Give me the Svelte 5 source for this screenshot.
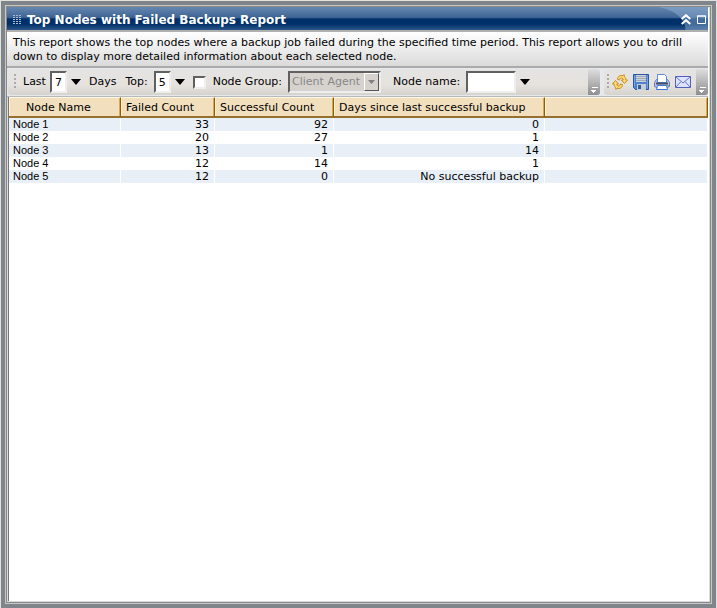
<script lang="ts">
  const columns = ['Node Name', 'Failed Count', 'Successful Count', 'Days since last successful backup'];

  const rows = [
    { name: 'Node 1', failed: 33, successful: 92, days: '0' },
    { name: 'Node 2', failed: 20, successful: 27, days: '1' },
    { name: 'Node 3', failed: 13, successful: 1, days: '14' },
    { name: 'Node 4', failed: 12, successful: 14, days: '1' },
    { name: 'Node 5', failed: 12, successful: 0, days: 'No successful backup' },
  ];

  let last = $state('7');
  let top = $state('5');
  let nodeName = $state('');
  let useGroup = $state(false);
</script>

{#snippet arrow(label: string)}
  <button class="arrow" aria-label={label}>
    <svg width="10" height="6" viewBox="0 0 10 6"><path d="M0 0h10L5 6z" fill="#000" /></svg>
  </button>
{/snippet}

{#snippet more()}
  <button class="more" aria-label="Toolbar options">
    <svg width="7" height="8" viewBox="0 0 7 8">
      <path d="M1 1.500h6M0 4.500h5M1 5.500h3M2 6.500h1" stroke="#fff" />
    </svg>
  </button>
{/snippet}

<main class="frame">
  <section class="report">
    <header class="title-bar">
      <svg class="grip-dots" width="8" height="10" viewBox="0 0 8 10">
        <path d="M0 .5h8M0 2.500h8M0 4.500h8M0 6.500h8M0 8.500h8" stroke="#a9bbd0" stroke-dasharray="2 1" />
      </svg>
      <h1>Top Nodes with Failed Backups Report</h1>
      <div class="window-buttons">
        <button aria-label="Collapse">
          <svg width="10" height="11" viewBox="0 0 10 11">
            <path d="M.7 5L5 1.200 9.300 5M.7 10L5 6.200 9.300 10" fill="none" stroke="#fff" stroke-width="2" />
          </svg>
        </button>
        <button aria-label="Maximize">
          <svg width="9" height="9" viewBox="0 0 9 9">
            <path d="M.5 1h8v7.500h-8zM0 1h9" fill="none" stroke="#fff" />
          </svg>
        </button>
      </div>
    </header>

    <p class="description">
      This report shows the top nodes where a backup job failed during the specified time period. This report allows you
      to drill down to display more detailed information about each selected node.
    </p>

    <div class="toolbars">
      <form class="toolbar filters" onsubmit={(e) => e.preventDefault()}>
        <span class="grip"></span>
        <label for="last">Last</label>
        <input id="last" class="short" bind:value={last} />
        {@render arrow('Choose days')}
        <span class="days">Days</span>
        <label class="top-label" for="top">Top:</label>
        <input id="top" class="short" bind:value={top} />
        {@render arrow('Choose top')}
        <input id="use-group" class="check" type="checkbox" bind:checked={useGroup} />
        <label for="use-group">Node Group:</label>
        <span class="select-box">
          <select aria-label="Node Group" disabled={!useGroup}>
            <option>Client Agent</option>
          </select>
          <span class="select-arrow">
            <svg width="7" height="4" viewBox="0 0 7 4"><path d="M0 0h7L3.500 4z" fill="#808080" /></svg>
          </span>
        </span>
        <label class="node-label" for="node-name">Node name:</label>
        <input id="node-name" class="node-name" bind:value={nodeName} />
        {@render arrow('Choose node name')}
        {@render more()}
      </form>

      <div class="toolbar actions">
        <span class="grip"></span>
        <button aria-label="Refresh">
          <svg width="16" height="16" viewBox="0 0 16 16">
            <g fill="#ffdc78" stroke="#c98a1c" stroke-linejoin="round">
              <path d="M5.500 5.500C5.500 2.500 8 .8 11 1.800L12 .6l.6 2.200c1 .8 1.400 2 1.200 3.200h1.700L12.500 9.500 9.500 6h1.700c0-1.500-1-2.200-2.200-2-1 .2-1.300 1-1.300 2z" />
              <path d="M10.500 10.500c0 3-2.500 4.700-5.500 3.700L4 15.400l-.6-2.200c-1-.8-1.400-2-1.200-3.200H.5L3.500 6.500 6.500 10H4.800c0 1.500 1 2.200 2.200 2 1-.2 1.300-1 1.300-2z" />
            </g>
          </svg>
        </button>
        <button aria-label="Save">
          <svg width="16" height="16" viewBox="0 0 16 16">
            <path d="M.5.5h15v15h-13l-2-2z" fill="#4d80d0" stroke="#2856a3" />
            <path d="M1.500 1.500v11M14.500 1.500v13" stroke="#78a4e4" />
            <path d="M3 1h10v7H3z" fill="#c9d3d8" />
            <path d="M3 2.500h10M3 4.500h10M3 6.500h10" stroke="#9eacb5" />
            <path d="M4 10h9v6H4z" fill="#c5cdd4" />
            <path d="M5 11h3v4H5z" fill="#315ba3" />
          </svg>
        </button>
        <button aria-label="Print">
          <svg width="16" height="16" viewBox="0 0 16 16">
            <path d="M2.500 5.500l-2 3v4l2 1h11l2-1v-4l-2-3z" fill="#b8c4e4" stroke="#6978ad" />
            <path d="M3.500.5h7l2 2v6h-9z" fill="#fff" stroke="#5989d3" />
            <path d="M2 9.500h12" stroke="#454e68" stroke-width="2" />
            <path d="M3.500 11.500h9l1 4h-11z" fill="#fff" stroke="#3976d5" />
            <path d="M13 11.500h2" stroke="#65b548" />
          </svg>
        </button>
        <button aria-label="Send by e-mail">
          <svg width="16" height="16" viewBox="0 0 16 16">
            <path d="M.5 2.500h15v11H.5z" fill="#dce2ff" stroke="#5061bd" />
            <path d="M1 3l7 6 7-6M1 13l5-5.500M15 13l-5-5.500" fill="none" stroke="#6677cf" />
          </svg>
        </button>
        {@render more()}
      </div>
    </div>

    <div class="results">
      <table>
        <colgroup>
          <col class="col-name" />
          <col class="col-failed" />
          <col class="col-successful" />
          <col class="col-days" />
          <col />
        </colgroup>
        <thead>
          <tr>
            {#each columns as column}
              <th>{column}</th>
            {/each}
            <th></th>
          </tr>
        </thead>
        <tbody>
          {#each rows as row}
            <tr>
              <td class="name">{row.name}</td>
              <td>{row.failed}</td>
              <td>{row.successful}</td>
              <td>{row.days}</td>
              <td></td>
            </tr>
          {/each}
        </tbody>
      </table>
    </div>
  </section>
</main>

<style>
  :global(body) {
    background: #e2e2dc;
  }

  .frame {
    display: flex;
    box-sizing: border-box;
    min-height: 100vh;
    padding: 1px 1px 0;
    font: 11px/14px Verdana, 'DejaVu Sans', sans-serif;
    color: #000;
  }

  .report {
    display: flex;
    flex-direction: column;
    flex: 1;
    min-width: 0;
    border: 4px solid #7f858a;
    box-shadow: inset 0 0 0 1px #c8c8c4, inset 0 0 0 2px #888, inset 0 0 0 3px #d8dadb;
    padding: 2px 4px 3px 2px;
    background: #fff;
  }

  button {
    display: flex;
    align-items: center;
    justify-content: center;
    margin: 0;
    padding: 0;
    border: 0;
    background: none;
  }

  svg {
    display: block;
  }

  .title-bar {
    display: flex;
    align-items: center;
    box-sizing: border-box;
    height: 23px;
    padding: 2px 2px 0 6px;
    background:
      radial-gradient(ellipse 36px 24px at 0 100%, transparent 97%, rgba(150, 180, 215, 0.45) 100%) right / 58px 100% no-repeat,
      linear-gradient(#6688b0, #3f6595 45%, #00306a 52%, #003069 75%, #2c5588);
    color: #fff;
  }

  h1 {
    margin: 0 0 0 6px;
    font-size: 12px;
    line-height: 16px;
    white-space: nowrap;
  }

  .window-buttons {
    display: flex;
    align-items: center;
    gap: 6px;
    margin-left: auto;
  }

  .description {
    margin: 0;
    min-height: 28px;
    padding: 4px 6px 2px;
    border-top: 2px solid #b0b0b0;
    border-bottom: 2px solid #aaa;
    background: linear-gradient(#fff, #dadada);
  }

  .toolbars {
    display: flex;
    gap: 4px;
    height: 26px;
    padding: 1px 0 1px 1px;
    background: #e5e9ed;
    border-bottom: 1px solid #b4b9be;
  }

  .toolbar {
    display: flex;
    align-items: center;
    border-radius: 3px;
    background: linear-gradient(#e4e4e3, #e6e2de 60%, #d6d3cd);
    white-space: nowrap;
  }

  .filters {
    flex: 1;
    padding-left: 6px;
  }

  .actions {
    gap: 5px;
    padding-left: 3px;
  }

  .grip {
    width: 2px;
    height: 16px;
    background: repeating-linear-gradient(#aaa 0 2px, transparent 2px 4px);
  }

  .filters .grip {
    margin-right: 7px;
  }

  .actions .grip {
    margin-right: -2px;
  }

  .arrow {
    width: 18px;
    height: 20px;
  }

  .more {
    align-self: stretch;
    align-items: flex-end;
    width: 12px;
    margin-left: auto;
    padding-bottom: 1px;
    border-radius: 0 3px 3px 0;
    background: linear-gradient(#dedede, #8e8e8e);
  }

  input,
  select {
    box-sizing: border-box;
    margin: 0;
    border: 2px solid;
    border-color: #606060 #eee #eee #606060;
    border-radius: 0;
    background: #fff;
    color: #000;
    font: inherit;
  }

  .short {
    width: 17px;
    height: 22px;
    margin-left: 4px;
    padding: 0 3px;
  }

  .days {
    margin: 0 9px 0 4px;
  }

  .top-label {
    margin-right: 2px;
  }

  .check {
    appearance: none;
    width: 13px;
    height: 13px;
    margin: 0 7px 0 4px;
  }

  .check:checked {
    background: #316ac5;
  }

  .select-box {
    position: relative;
    margin-left: 6px;
  }

  select {
    appearance: none;
    display: block;
    width: 93px;
    height: 22px;
    padding: 0 2px;
    background: #d6d3ce;
  }

  select:disabled {
    color: #888;
    opacity: 1;
  }

  .select-arrow {
    position: absolute;
    top: 2px;
    right: 2px;
    bottom: 2px;
    display: flex;
    align-items: center;
    justify-content: center;
    box-sizing: border-box;
    width: 15px;
    border: 1px solid;
    border-color: #fff #555 #555 #fff;
    background: #d6d3ce;
    pointer-events: none;
  }

  .node-label {
    margin-left: 12px;
  }

  .node-name {
    width: 50px;
    height: 22px;
    margin-left: 6px;
    padding: 0 3px;
  }

  .results {
    flex: 1;
    margin-left: 1px;
    border-left: 1px solid #777;
  }

  table {
    table-layout: fixed;
    width: 100%;
    border-collapse: separate;
    border-spacing: 0;
  }

  .col-name {
    width: 112px;
  }

  .col-failed {
    width: 94px;
  }

  .col-successful {
    width: 119px;
  }

  .col-days {
    width: 211px;
  }

  th {
    box-sizing: border-box;
    height: 21px;
    padding: 2px 0 0 5px;
    border-top: 1px solid #fff6df;
    border-right: 1px solid #8a5d10;
    border-bottom: 2px solid #94702c;
    background: #f1dfbe;
    box-shadow: inset 1px 0 #fff0d0, inset -1px 0 #d9a84c;
    font-weight: normal;
    text-align: left;
    white-space: nowrap;
  }

  th:first-child {
    padding-left: 17px;
  }

  td {
    height: 13px;
    padding: 0 5px 0 4px;
    border-right: 1px solid #fff;
    line-height: 13px;
    text-align: right;
    white-space: nowrap;
  }

  tbody tr:nth-child(odd) {
    background: #e8eff7;
  }

  .name {
    font-family: Arial, 'Liberation Sans', sans-serif;
    text-align: left;
  }
</style>
